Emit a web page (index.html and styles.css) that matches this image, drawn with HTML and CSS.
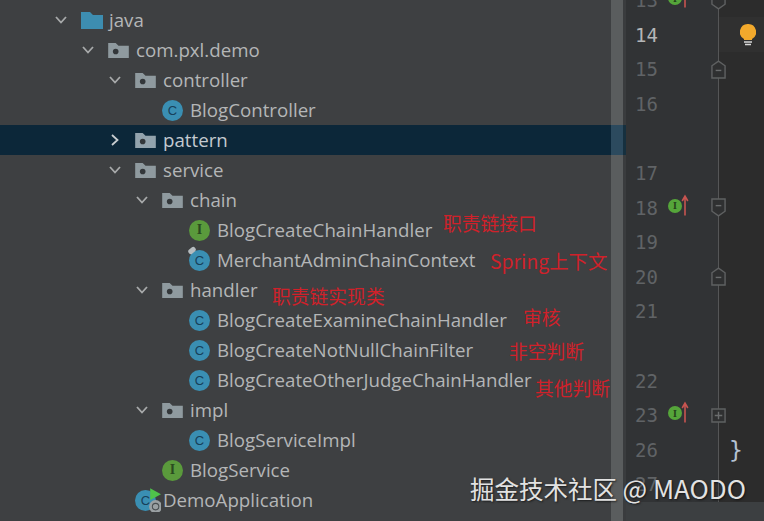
FILE: index.html
```html
<!DOCTYPE html>
<html lang="en">
<head>
  <meta charset="UTF-8" />
  <title>Project tree</title>
  <link rel="stylesheet" href="styles.css">
</head>
<body>
  <svg class="defs" width="0" height="0">
    <symbol id="folder" viewBox="0 0 22 16"><path d="M0 0H8L11 3H22V16H0Z" fill="currentColor"/><circle cx="8" cy="9" r="3" fill="#33373a"/></symbol>
    <symbol id="src" viewBox="0 0 22 17"><path d="M0 0H9L12 3H22V17H0Z" fill="currentColor"/></symbol>
    <symbol id="down" viewBox="0 0 12 8"><path d="M1 1L6 6.500L11 1" fill="none" stroke="currentColor" stroke-width="1.800"/></symbol>
    <symbol id="right" viewBox="0 0 8 12"><path d="M1 1L6.500 6L1 11" fill="none" stroke="currentColor" stroke-width="1.800"/></symbol>
    <symbol id="fold-open" viewBox="0 0 16 20"><path d="M1 6L8 1L15 6V19H1Z" fill="#2f3031" stroke="#5f6162" stroke-width="1.500"/><path d="M5 11H11" stroke="#6a6c6d" stroke-width="1.500"/></symbol>
    <symbol id="fold-close" viewBox="0 0 16 20"><path d="M1 1H15V14L8 19L1 14Z" fill="#2f3031" stroke="#5f6162" stroke-width="1.500"/><path d="M5 8H11" stroke="#6a6c6d" stroke-width="1.500"/></symbol>
    <symbol id="fold-plus" viewBox="0 0 16 16"><path d="M1 1H15V15H1Z" fill="#2f3031" stroke="#5f6162" stroke-width="1.500"/><path d="M4 8H12M8 4V12" stroke="#6a6c6d" stroke-width="1.500"/></symbol>
    <symbol id="up" viewBox="0 0 10 26"><path d="M5 26V3M1.500 8L5 2L8.500 8" fill="none" stroke="#c75450" stroke-width="2"/></symbol>
  </svg>

  <div class="window">
    <!-- Project tree -->
    <div class="tree">
      <div class="row depth-0"><svg class="chev"><use href="#down"/></svg><svg class="folder src-root"><use href="#src"/></svg><span>java</span></div>
      <div class="row depth-1"><svg class="chev"><use href="#down"/></svg><svg class="folder"><use href="#folder"/></svg><span>com.pxl.demo</span></div>
      <div class="row depth-2"><svg class="chev"><use href="#down"/></svg><svg class="folder"><use href="#folder"/></svg><span>controller</span></div>
      <div class="row depth-3"><i class="chev"></i><b class="badge cls">C</b><span>BlogController</span></div>
      <div class="row depth-2 selected"><svg class="chev-right"><use href="#right"/></svg><svg class="folder"><use href="#folder"/></svg><span>pattern</span></div>
      <div class="row depth-2"><svg class="chev"><use href="#down"/></svg><svg class="folder"><use href="#folder"/></svg><span>service</span></div>
      <div class="row depth-3"><svg class="chev"><use href="#down"/></svg><svg class="folder"><use href="#folder"/></svg><span>chain</span></div>
      <div class="row depth-4"><i class="chev"></i><b class="badge intf">I</b><span>BlogCreateChainHandler</span></div>
      <div class="row depth-4"><i class="chev"></i><b class="badge cls abstract">C</b><span>MerchantAdminChainContext</span></div>
      <div class="row depth-3"><svg class="chev"><use href="#down"/></svg><svg class="folder"><use href="#folder"/></svg><span>handler</span></div>
      <div class="row depth-4"><i class="chev"></i><b class="badge cls">C</b><span>BlogCreateExamineChainHandler</span></div>
      <div class="row depth-4"><i class="chev"></i><b class="badge cls">C</b><span>BlogCreateNotNullChainFilter</span></div>
      <div class="row depth-4"><i class="chev"></i><b class="badge cls">C</b><span>BlogCreateOtherJudgeChainHandler</span></div>
      <div class="row depth-3"><svg class="chev"><use href="#down"/></svg><svg class="folder"><use href="#folder"/></svg><span>impl</span></div>
      <div class="row depth-4"><i class="chev"></i><b class="badge cls">C</b><span>BlogServiceImpl</span></div>
      <div class="row depth-3"><i class="chev"></i><b class="badge intf">I</b><span>BlogService</span></div>
      <div class="row depth-2"><i class="chev"></i><b class="badge cls app">C
        <svg class="app-marks" viewBox="0 0 24 24"><path d="M14 2L24 7.500L14 13Z" fill="#4fc24a"/><circle cx="19" cy="19" r="6" fill="#9aa0a3"/><circle cx="19" cy="19" r="3" fill="none" stroke="#4a4f52"/></svg></b><span>DemoApplication</span></div>
    </div>

    <div class="scrollbar"><div class="scrollbar-sel"></div></div>

    <!-- Editor gutter -->
    <div class="editor">
      <div class="line"><div class="gutter"><span class="num">13</span><b class="mark">I</b><svg class="up"><use href="#up"/></svg><svg class="fold"><use href="#fold-close"/></svg></div><div class="code"></div></div>
      <div class="line current"><div class="gutter"><span class="num">14</span></div><div class="code"><svg class="bulb" viewBox="0 0 16 22"><path d="M8 0A8 8 0 0 1 12 15V16H4V15A8 8 0 0 1 8 0Z" fill="#f2a92c"/><path d="M4 18H12M5 20.500H11" stroke="#d8d8d8" stroke-width="1.500"/></svg></div></div>
      <div class="line"><div class="gutter"><span class="num">15</span><svg class="fold"><use href="#fold-open"/></svg></div><div class="code"></div></div>
      <div class="line"><div class="gutter"><span class="num">16</span></div><div class="code"></div></div>
      <div class="line"><div class="gutter"></div><div class="code"></div></div>
      <div class="line"><div class="gutter"><span class="num">17</span></div><div class="code"></div></div>
      <div class="line"><div class="gutter"><span class="num">18</span><b class="mark">I</b><svg class="up"><use href="#up"/></svg><svg class="fold"><use href="#fold-close"/></svg></div><div class="code"></div></div>
      <div class="line"><div class="gutter"><span class="num">19</span></div><div class="code"></div></div>
      <div class="line"><div class="gutter"><span class="num">20</span><svg class="fold"><use href="#fold-open"/></svg></div><div class="code"></div></div>
      <div class="line"><div class="gutter"><span class="num">21</span></div><div class="code"></div></div>
      <div class="line"><div class="gutter"></div><div class="code"></div></div>
      <div class="line"><div class="gutter"><span class="num">22</span></div><div class="code"></div></div>
      <div class="line"><div class="gutter"><span class="num">23</span><b class="mark">I</b><svg class="up"><use href="#up"/></svg><svg class="fold small"><use href="#fold-plus"/></svg></div><div class="code"></div></div>
      <div class="line"><div class="gutter"><span class="num">26</span></div><div class="code"><span class="brace">}</span></div></div>
      <div class="line"><div class="gutter"><span class="num">27</span></div><div class="code"></div></div>
    </div>
  </div>

  <!-- Red notes written over the screenshot -->
  <span class="note note-iface">职责链接口</span>
  <span class="note note-spring">Spring上下文</span>
  <span class="note note-impl">职责链实现类</span>
  <span class="note note-audit">审核</span>
  <span class="note note-null">非空判断</span>
  <span class="note note-other">其他判断</span>

  <div class="watermark">掘金技术社区 <span class="watermark-name">@ MAODO</span></div>
</body>
</html>
```

FILE: styles.css
```css
html, body {
  margin: 0;
  height: 100%;
  overflow: hidden;
  background: #3c3f41;
}

.defs {
  position: absolute;
}

.window {
  display: flex;
  height: 521px;
}

.tree {
  width: 611px;
  padding-top: 5px;
  box-sizing: border-box;
  background: #3e4042;
  color: #b4b6b7;
  font-family: "Open Sans", sans-serif;
  font-size: 18.700px;
}

.row {
  display: flex;
  align-items: center;
  height: 30px;
  white-space: nowrap;
}

.row span {
  margin-bottom: 2px;
}

.depth-0 { padding-left: 55px; }
.depth-1 { padding-left: 82px; }
.depth-2 { padding-left: 109px; }
.depth-3 { padding-left: 136px; }
.depth-4 { padding-left: 163px; }

.selected {
  background: #0c2739;
  color: #c4cad0;
}

.chev {
  display: block;
  width: 12px;
  height: 8px;
  margin-right: 14px;
  color: #a8aaab;
}

.chev-right {
  display: block;
  width: 8px;
  height: 12px;
  margin: 0 16px 0 2px;
  color: #c9cdd0;
}

.folder {
  width: 21px;
  height: 15px;
  margin-right: 7px;
  color: #8f9a9f;
}

.selected .folder {
  color: #93a3ad;
}

.selected .folder circle {
  fill: #0c2739;
}

.folder.src-root {
  width: 22px;
  height: 17px;
  margin-right: 6px;
  color: #3d8db0;
}

.badge {
  position: relative;
  display: flex;
  align-items: center;
  justify-content: center;
  width: 21px;
  height: 21px;
  margin-right: 7px;
  border-radius: 50%;
  font-family: "Liberation Sans", sans-serif;
  font-size: 13px;
  font-weight: normal;
}

.cls {
  background: #3a8fb3;
  color: #17405a;
}

.intf {
  background: #5a9a3c;
  color: #2a4a20;
  font-family: "Liberation Serif", serif;
  font-weight: bold;
  font-size: 14px;
}

.abstract::before {
  content: "";
  position: absolute;
  top: -2px;
  left: -1px;
  width: 8px;
  height: 5px;
  background: #b6bcbf;
  border-radius: 2px;
  transform: rotate(-40deg);
}

.app-marks {
  position: absolute;
  top: -4px;
  left: 0;
  width: 26px;
  height: 26px;
}

.scrollbar {
  width: 15px;
  padding-top: 125px;
  box-sizing: border-box;
  background: linear-gradient(to right, #5a5d5e 12px, #3a3c3e 12px);
}

.scrollbar-sel {
  height: 30px;
  background: linear-gradient(to right, #2c4a5e 12px, #16303f 12px);
}

.editor {
  flex: 1;
  margin-top: -17.3px;
}

.line {
  display: flex;
  height: 34.6px;
}

.gutter {
  display: flex;
  align-items: center;
  width: 93px;
  box-sizing: border-box;
  padding-left: 9px;
  border-right: 1.5px solid #555657;
  background: #313335;
}

.num {
  width: 33px;
  color: #606366;
  font-family: "DejaVu Sans Mono", monospace;
  font-size: 19px;
}

.current .num {
  color: #b4b6b7;
}

.mark {
  display: flex;
  align-items: center;
  justify-content: center;
  width: 14px;
  height: 14px;
  margin-top: -4px;
  border-radius: 50%;
  background: #55a53a;
  color: #24401b;
  font-family: "Liberation Serif", serif;
  font-size: 10px;
}

.up {
  width: 8px;
  height: 24px;
  margin: -6px 0 0 -1px;
}

.fold {
  position: relative;
  width: 15px;
  height: 19px;
  margin-left: auto;
  margin-right: -8px;
}

.fold.small {
  height: 15px;
}

.code {
  flex: 1;
  display: flex;
  align-items: center;
  padding-left: 10px;
  background: #2c2c2c;
}

.current .code {
  background: #303030;
}

.bulb {
  width: 16px;
  height: 22px;
  margin-left: 11px;
}

.brace {
  color: #b4c2d2;
  font-family: "DejaVu Sans Mono", monospace;
  font-size: 23px;
}

.note {
  position: absolute;
  color: #d0212a;
  font-family: "Noto Sans CJK SC", sans-serif;
  font-size: 18.800px;
  line-height: 24px;
  white-space: nowrap;
}

.note-iface { left: 443px; top: 211px; }
.note-spring { left: 490px; top: 249px; font-size: 19.400px; }
.note-impl { left: 272px; top: 284px; }
.note-audit { left: 523px; top: 305px; }
.note-null { left: 509px; top: 339px; }
.note-other { left: 535px; top: 376px; }

.watermark {
  position: absolute;
  left: 470px;
  top: 470px;
  color: #e2e2e2;
  font-family: "Noto Sans CJK SC", sans-serif;
  font-size: 24.500px;
  line-height: 36px;
  white-space: nowrap;
  text-shadow: 1px 1px 2px rgba(0, 0, 0, 0.6);
}

.watermark-name {
  font-size: 26px;
}
```
